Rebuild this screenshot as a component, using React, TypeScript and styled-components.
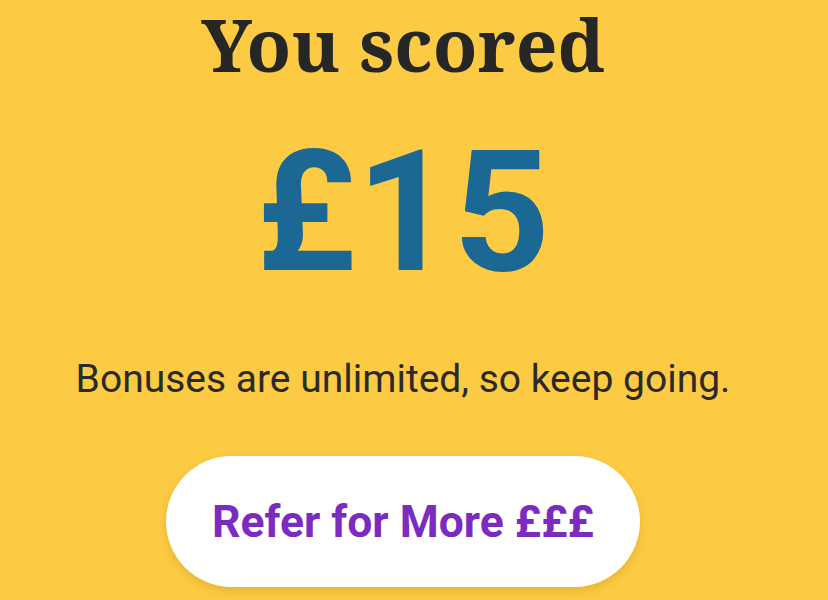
import React from "react";
import styled, { createGlobalStyle } from "styled-components";

const GlobalStyle = createGlobalStyle`
  html, body {
    margin: 0;
    padding: 0;
    background: #fdcb43;
  }
`;

const Screen = styled.div`
  box-sizing: border-box;
  width: 828px;
  height: 600px;
  padding-right: 22px;
  overflow: hidden;
  background: #fdcb43;
  display: flex;
  flex-direction: column;
  align-items: center;
`;

const Title = styled.h1`
  margin: 1px 0 0;
  font-family: "Noto Serif", "DejaVu Serif", "Liberation Serif", serif;
  font-weight: 700;
  font-size: 73px;
  line-height: 86px;
  color: #262626;
`;

const Score = styled.div`
  margin-top: 35px;
  font-family: Roboto, "Liberation Sans", sans-serif;
  font-weight: 700;
  font-size: 169px;
  line-height: 180px;
  color: #1b6895;
`;

const Message = styled.p`
  margin: 53px 0 0;
  font-family: Roboto, "Liberation Sans", sans-serif;
  font-weight: 400;
  font-size: 39px;
  line-height: 48px;
  color: #2a2a2a;
`;

const ReferButton = styled.button`
  margin-top: 53px;
  width: 474px;
  height: 131px;
  flex-shrink: 0;
  border: none;
  border-radius: 66px;
  background: #ffffff;
  box-shadow: 0 4px 10px rgba(160, 110, 0, 0.25);
  font-family: Roboto, "Liberation Sans", sans-serif;
  font-weight: 700;
  font-size: 44.5px;
  color: #7b2bbf;
  cursor: pointer;
`;

export default function App() {
  return (
    <>
      <GlobalStyle />
      <Screen>
        <Title>You scored</Title>
        <Score>£15</Score>
        <Message>Bonuses are unlimited, so keep going.</Message>
        <ReferButton>Refer for More £££</ReferButton>
      </Screen>
    </>
  );
}
